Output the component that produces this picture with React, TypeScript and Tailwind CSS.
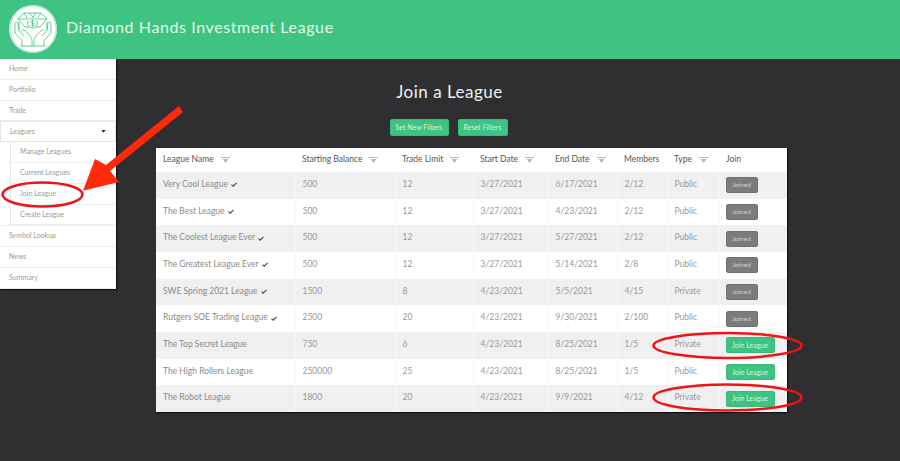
const sideTop = ['Home', 'Portfolio', 'Trade']
const sideSub = ['Manage Leagues', 'Current Leagues', 'Join League', 'Create League']
const sideBottom = ['Symbol Lookup', 'News', 'Summary']

const rows = [
  { name: 'Very Cool League', joined: true, balance: '500', limit: '12', start: '3/27/2021', end: '6/17/2021', members: '2/12', type: 'Public' },
  { name: 'The Best League', joined: true, balance: '500', limit: '12', start: '3/27/2021', end: '4/23/2021', members: '2/12', type: 'Public' },
  { name: 'The Coolest League Ever', joined: true, balance: '500', limit: '12', start: '3/27/2021', end: '5/27/2021', members: '2/12', type: 'Public' },
  { name: 'The Greatest League Ever', joined: true, balance: '500', limit: '12', start: '3/27/2021', end: '5/14/2021', members: '2/8', type: 'Public' },
  { name: 'SWE Spring 2021 League', joined: true, balance: '1500', limit: '8', start: '4/23/2021', end: '5/5/2021', members: '4/15', type: 'Private' },
  { name: 'Rutgers SOE Trading League', joined: true, balance: '2500', limit: '20', start: '4/23/2021', end: '9/30/2021', members: '2/100', type: 'Public' },
  { name: 'The Top Secret League', joined: false, balance: '750', limit: '6', start: '4/23/2021', end: '8/25/2021', members: '1/5', type: 'Private' },
  { name: 'The High Rollers League', joined: false, balance: '250000', limit: '25', start: '4/23/2021', end: '8/25/2021', members: '1/5', type: 'Public' },
  { name: 'The Robot League', joined: false, balance: '1800', limit: '20', start: '4/23/2021', end: '9/9/2021', members: '4/12', type: 'Private' },
]

const columns = [
  { label: 'League Name', width: 'w-[139px]', filter: true },
  { label: 'Starting Balance', width: 'w-[100px]', filter: true },
  { label: 'Trade Limit', width: 'w-[78px]', filter: true },
  { label: 'Start Date', width: 'w-[75px]', filter: true },
  { label: 'End Date', width: 'w-[69px]', filter: true },
  { label: 'Members', width: 'w-[50px]', filter: false },
  { label: 'Type', width: 'w-[52px]', filter: true },
  { label: 'Join', width: 'w-[68px]', filter: false },
]

function FilterIcon() {
  return (
    <svg width="9" height="6" viewBox="0 0 9 6" className="ml-[7px] inline-block align-[-1px]">
      <path d="M0 0.5H9" stroke="#b8b8b8" strokeWidth="1" />
      <path d="M1.5 2H7.5L4.5 6Z" fill="#b8b8b8" />
    </svg>
  )
}

function Check() {
  return (
    <svg width="6" height="5" viewBox="0 0 6 5" className="ml-[3px] inline-block">
      <path d="M0.5 2.6L2.2 4.2L5.5 0.8" fill="none" stroke="#444" strokeWidth="1.1" />
    </svg>
  )
}

function Logo() {
  return (
    <svg width="48" height="48" viewBox="0 0 48 48" className="shrink-0">
      <circle cx="24" cy="24" r="24" fill="#fff" />
      <circle cx="24" cy="24" r="23.2" fill="none" stroke="#3ec480" strokeWidth="0.5" />
      <g fill="none" stroke="#3ec480" strokeWidth="0.8" strokeLinejoin="round">
        {/* diamond */}
        <path d="M15 8H32L38 14L31 22H16L9 14Z" />
        <path d="M9 14H18M29 14H38M15 8L19 14M32 8L28 14M20 8L24 12L27 8" />
        <circle cx="23.5" cy="18" r="5" fill="#fff" />
        <path d="M25.5 16C24.5 15 21.8 15.2 21.8 16.8C21.8 18.6 25.6 17.6 25.6 19.4C25.6 21 22.6 21 21.5 20M23.5 14.2V21.8" />
        {/* left hand */}
        <path d="M13 41V35.5L6 28V18.5C6 16.5 8.8 16.5 9 18.5L10 25" />
        <path d="M10 17V25.5L15 31M12.5 26C14 24.5 15.5 25 17 26.5L21.5 31.5C22.5 33 23 34 23 36V41" />
        <path d="M11.5 41H24" />
        {/* right hand */}
        <path d="M35 41V35.5L42 28V18.5C42 16.5 39.2 16.5 39 18.5L38 25" />
        <path d="M38 17V25.5L33 31M35.5 26C34 24.5 32.5 25 31 26.5L26.5 31.5C25.5 33 25 34 25 36V41" />
        <path d="M24 41H36.5" />
      </g>
    </svg>
  )
}

function SideItem({ label }: { label: string }) {
  return (
    <div className="h-[20.8px] border-b border-[#eeeeee] pl-[9px] text-[7px] leading-[18.5px] text-[#9a9a9a]">
      {label}
    </div>
  )
}

export default function App() {
  return (
    <div className="relative h-[461px] w-[900px] overflow-hidden bg-[#2f2f31] font-['Lato',sans-serif]">
      {/* Top bar */}
      <header className="flex h-[59px] gap-[9px] bg-[#3ec480] pl-[9px] pt-[5px]">
        <Logo />
        <h1 className="mt-[12px] text-[16px] font-normal leading-[20px] tracking-[0.6px] text-[#e6f7ee]">Diamond Hands Investment League</h1>
      </header>

      {/* Sidebar */}
      <nav className="absolute left-0 top-[59px] w-[116px] bg-white shadow-[1px_1px_1px_#111]">
        {sideTop.map((s) => (
          <SideItem key={s} label={s} />
        ))}
        <div className="flex h-[20.8px] items-center justify-between border border-[#e6e6e6] px-[9px] pb-[1px] text-[7px] text-[#9a9a9a]">
          Leagues
          <svg width="5" height="3" viewBox="0 0 6 4">
            <path d="M0 0H6L3 3.5Z" fill="#333" />
          </svg>
        </div>
        <div className="border-b border-[#eeeeee] pl-[10px]">
          <div className="border-l border-[#e6e6e6]">
            {sideSub.map((s) => (
              <SideItem key={s} label={s} />
            ))}
          </div>
        </div>
        {sideBottom.map((s) => (
          <SideItem key={s} label={s} />
        ))}
      </nav>

      {/* Main */}
      <main className="flex flex-col items-center">
        <h2 className="mt-[24px] pr-[1px] text-[17px] font-normal leading-[18px] tracking-[0.5px] text-[#f0f0f0]">Join a League</h2>
        <div className="mt-[18px] flex gap-[9px] pr-[3px]">
          <button className="h-[17px] w-[59px] rounded-[2px] border border-[#3ab877] bg-[#3ec480] text-[7px] text-[#d8f3e5]">Set New Filters</button>
          <button className="h-[17px] w-[50px] rounded-[2px] border border-[#3ab877] bg-[#3ec480] text-[7px] text-[#d8f3e5]">Reset Filters</button>
        </div>
        <table className="ml-[156px] mt-[12px] w-[631px] table-fixed border-collapse self-start bg-white text-[8.5px] shadow-[1px_1px_1px_#111]">
          <thead>
            <tr className="h-[24px]">
              {columns.map((c) => (
                <th key={c.label} className={`${c.width} pl-[7px] pb-[1px] text-left font-normal text-[#555555]`}>
                  {c.label}
                  {c.filter && <FilterIcon />}
                </th>
              ))}
            </tr>
          </thead>
          <tbody>
            {rows.map((r, i) => (
              <tr key={r.name} className={i % 2 === 0 ? 'h-[26.67px] bg-[#f0f0f0]' : 'h-[26.67px] bg-white'}>
                <td className="border-r border-[#f8f8f8] pb-[2px] pl-[7px] text-[#8a8a8a]">
                  {r.name}
                  {r.joined && <Check />}
                </td>
                <td className="border-r border-[#f8f8f8] pb-[2px] pl-[7px] text-[#999999]">{r.balance}</td>
                <td className="border-r border-[#f8f8f8] pb-[2px] pl-[7px] text-[#999999]">{r.limit}</td>
                <td className="border-r border-[#f8f8f8] pb-[2px] pl-[7px] text-[#999999]">{r.start}</td>
                <td className="border-r border-[#f8f8f8] pb-[2px] pl-[7px] text-[#999999]">{r.end}</td>
                <td className="border-r border-[#f8f8f8] pb-[2px] pl-[7px] text-[#999999]">{r.members}</td>
                <td className="border-r border-[#f8f8f8] pb-[2px] pl-[7px] text-[#999999]">{r.type}</td>
                <td className="pl-[6px]">
                  {r.joined ? (
                    <button className="block h-[16px] w-[32px] rounded-[2px] border border-[#6f6f6f] bg-[#7c7c7c] text-[6.5px] text-[#cfcfcf]">Joined</button>
                  ) : (
                    <button className="block h-[16px] w-[49px] rounded-[2px] border border-[#3ab877] bg-[#3ec480] text-[7px] text-[#d8f3e5]">Join League</button>
                  )}
                </td>
              </tr>
            ))}
          </tbody>
        </table>
      </main>

      {/* Red annotations drawn over the screenshot */}
      <svg width="900" height="461" className="pointer-events-none absolute left-0 top-0">
        <path d="M179 106L183 112L110 171L119 182L83 190.7L95 159L106 165Z" fill="#ff2a0a" />
        <ellipse cx="42.5" cy="194.5" rx="40" ry="12" fill="none" stroke="#f0141a" strokeWidth="2.5" />
        <ellipse cx="727.5" cy="345.5" rx="74" ry="12.5" fill="none" stroke="#f0141a" strokeWidth="2.5" />
        <ellipse cx="727.5" cy="397.5" rx="74" ry="13" fill="none" stroke="#f0141a" strokeWidth="2.5" />
      </svg>
    </div>
  )
}
